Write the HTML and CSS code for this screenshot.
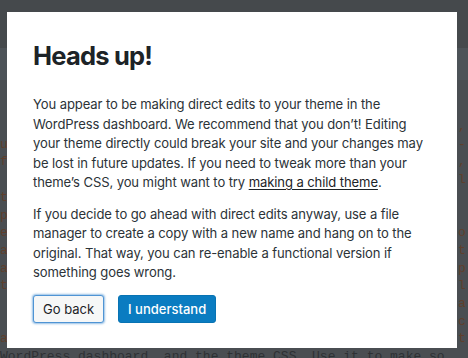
FILE: index.html
```html
<!DOCTYPE html>
<html lang="en">
<head>
<meta charset="utf-8">
<title>Heads up!</title>
<link rel="stylesheet" href="styles.css">
</head>
<body>
<div class="page">
  <div class="adminbar"></div>
  <div class="header"></div>
  <div class="code">
    <span class="l"> </span><span class="r">,</span>
    <span class="l">u</span><span class="r">-</span>
    <span class="l">f</span><span class="r">,</span>
    <span class="l"> </span><span class="r">l</span>
    <span class="l">t</span><span class="r"> </span>
    <span class="l">p</span><span class="r"> </span>
    <span class="l">e</span><span class="r">o</span>
    <span class="l">a</span><span class="r">t</span>
    <span class="l">a</span><span class="r">p</span>
    <span class="l">t</span><span class="r">l</span>
    <span class="l"> </span><span class="r">a</span>
    <span class="l"> </span><span class="r">c</span>
    <span class="l">a</span><span class="r">t</span>
  </div>
  <div class="code-last">WordPress dashboard, and the theme CSS. Use it to make so</div>
</div>

<div class="modal" role="dialog" aria-labelledby="warn-title">
  <h1 id="warn-title" class="modal-title">Heads up!</h1>
  <p class="modal-text">You appear to be making direct edits to your theme in the WordPress dashboard. We recommend that you don’t! Editing your theme directly could break your site and your changes may be lost in future updates. If you need to tweak more than your theme’s CSS, you might want to try <a class="link" href="#">making a child theme</a>.</p>
  <p class="modal-text">If you decide to go ahead with direct edits anyway, use a file manager to create a copy with a new name and hang on to the original. That way, you can re-enable a functional version if something goes wrong.</p>
  <div class="actions">
    <button class="btn btn-secondary" type="button">Go back</button>
    <button class="btn btn-primary" type="button">I understand</button>
  </div>
</div>
</body>
</html>
```

FILE: styles.css
```css
html, body {
  margin: 0;
  padding: 0;
}

body {
  background: #4a4e52;
  width: 468px;
  height: 358px;
  overflow: hidden;
  position: relative;
}

.page {
  display: flex;
  flex-direction: column;
  height: 358px;
  overflow: hidden;
}

.adminbar {
  height: 48px;
  flex: none;
  background: #45494c;
}

.header {
  height: 32px;
  flex: none;
  background: #4d5358;
}

.code {
  margin-top: 38px;
  display: grid;
  grid-template-columns: 8px 1fr 10px;
  font-family: "Liberation Mono", monospace;
  font-size: 13px;
  line-height: 17.7px;
  color: #5f3f2c;
}

.code .l {
  grid-column: 1;
  overflow: hidden;
}

.code .r {
  grid-column: 3;
  overflow: hidden;
}

.code-last {
  font-family: "Liberation Mono", monospace;
  font-size: 13px;
  line-height: 17.7px;
  color: #2e3134;
  white-space: nowrap;
}

.modal {
  position: absolute;
  left: 7px;
  top: 12px;
  width: 450px;
  height: 336px;
  box-sizing: border-box;
  background: #fff;
  padding: 26px 26px 0 26px;
  font-family: "Inter", "Noto Sans", sans-serif;
  color: #2c3338;
}

.modal-title {
  margin: 0 0 21px;
  font-size: 25.5px;
  line-height: 36px;
  font-weight: 700;
  letter-spacing: -0.8px;
  color: #1d2327;
}

.modal-text {
  margin: 0 0 12px;
  font-size: 13.05px;
  line-height: 19.5px;
  letter-spacing: -0.1px;
}

.link {
  color: #1d2327;
  text-decoration: underline;
  text-underline-offset: 2px;
}

.actions {
  display: flex;
  gap: 14px;
  margin-top: 12px;
}

.btn {
  font-family: "Inter", "Noto Sans", sans-serif;
  font-size: 13px;
  height: 28px;
  border-radius: 3px;
  padding: 0 9px;
  cursor: pointer;
}

.btn-secondary {
  background: #f6f7f7;
  color: #1d2327;
  border: 1px solid #4f94d4;
  box-shadow: 0 0 2px 1px rgba(79, 148, 212, 0.6);
}

.btn-primary {
  background: #0a7cc1;
  color: #fff;
  border: 1px solid #0873b3;
  font-weight: 500;
}
```
